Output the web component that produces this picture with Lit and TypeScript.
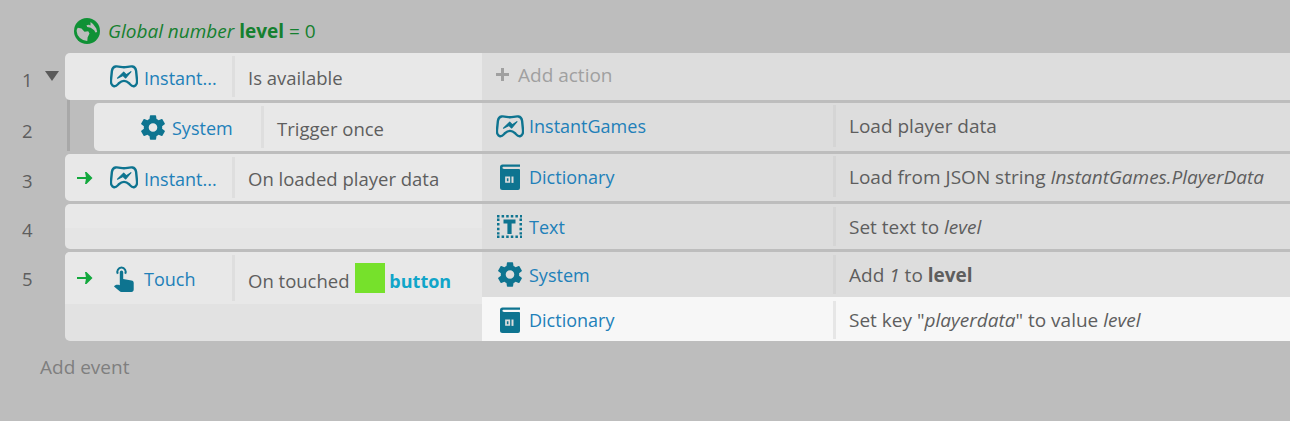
import { LitElement, html, css, svg } from "lit";
import { customElement } from "lit/decorators.js";

const icons: Record<string, any> = {
  game: svg`<svg class="ic" viewBox="0 0 28 23" width="28" height="23"><path d="M5.500 1.500c3-.5 5.500.8 8.500.8s5.500-1.300 8.500-.8c2.200.4 3.200 1.800 3.600 4.400l.9 9c.3 3-.8 5.900-3 6.300-2.100.4-3.200-1.200-5-3-1.500-1.500-3-2.300-5-2.300s-3.500.8-5 2.300c-1.800 1.800-2.900 3.400-5 3-2.200-.4-3.300-3.300-3-6.300l.9-9c.4-2.600 1.400-4 3.600-4.400z" fill="none" stroke="#0e7490" stroke-width="2.400"/><path d="M7.500 13.200l6.200-6 2.700 2.600 4.600-3.100-5.300 6.300-2.800-2.600z" fill="#0e7490" stroke="#0e7490" stroke-width="1.100" stroke-linejoin="round"/></svg>`,
  gear: svg`<svg class="ic" viewBox="2.300 1.800 19.400 20.400" width="24" height="25"><path fill="#0e7490" d="M19.430 12.980c.04-.32.07-.64.07-.98s-.03-.66-.07-.98l2.110-1.650c.19-.15.24-.42.120-.64l-2-3.460c-.12-.22-.39-.3-.61-.22l-2.490 1c-.52-.4-1.080-.73-1.690-.98l-.38-2.650C14.460 2.180 14.250 2 14 2h-4c-.25 0-.46.18-.49.42l-.38 2.650c-.61.25-1.170.59-1.690.98l-2.490-1c-.23-.09-.49 0-.61.22l-2 3.460c-.13.22-.07.49.12.64l2.110 1.650c-.04.32-.07.65-.07.98s.03.66.07.98l-2.110 1.650c-.19.15-.24.42-.12.64l2 3.460c.12.22.39.3.61.22l2.490-1c.52.4 1.080.73 1.690.98l.38 2.650c.03.24.24.42.49.42h4c.25 0 .46-.18.49-.42l.38-2.650c.61-.25 1.170-.59 1.690-.98l2.490 1c.23.09.49 0 .61-.22l2-3.460c.12-.22.07-.49-.12-.64l-2.110-1.650zM12 15.500c-1.930 0-3.500-1.570-3.500-3.500s1.570-3.500 3.500-3.500 3.500 1.570 3.500 3.500-1.570 3.500-3.500 3.500z"/></svg>`,
  dict: svg`<svg class="ic" viewBox="0 0 20 26" width="20" height="26"><path fill="#0e7490" d="M2.500 .5H20v2.200H4c-1 0-1.600.4-1.600 1.100S3 4.900 4 4.900h14.800c.7 0 1.200.5 1.200 1.200V24a2 2 0 0 1-2 2H2.500A2.500 2.500 0 0 1 0 23.500V3A2.500 2.500 0 0 1 2.500 .5z"/><path fill="none" stroke="#ddd" stroke-width="1.700" d="M6 13.400h3.300v4.600H6z"/><path fill="#ddd" d="M11.500 12.500h2v6.400h-2z"/></svg>`,
  text: svg`<svg class="ic" viewBox="0 0 25 23" width="25" height="23"><g fill="none" stroke="#0e7490" stroke-width="2.500" stroke-dasharray="2.500 2.100"><path d="M0 1.250h25M0 21.750h25M1.250 3.500v16M23.750 3.500v16"/></g><path fill="#0e7490" d="M6.500 4.500h12v4h-3.900v10.500h-4.200V8.500H6.500z"/></svg>`,
  touch: svg`<svg class="ic" viewBox="0 0 20 27" width="20" height="27"><path fill="none" stroke="#0e7490" stroke-width="2" d="M3.800 8.800a4.200 4.200 0 1 1 7.400 0"/><path fill="#0e7490" d="M5.800 7.300a1.700 1.700 0 0 1 3.400 0v6.700l8.300 1.500c1.500.3 2.200 1.200 2.200 2.500V24.500c0 1.400-.9 2.500-2.300 2.500H7.500c-.9 0-1.500-.3-2.100-.9L0 21.500c.9-1.500 3.100-2.200 5.800-1.200z"/></svg>`,
  globe: svg`<svg viewBox="0 0 26 26" width="26" height="26"><circle cx="13" cy="13" r="13" fill="#0f9135"/><path fill="#bdbdbd" d="M3.800 9.800l3.700.7 3 3.300 3.700-.5 1.300 2.300-1.900 4-.3 3.300A10.500 10.500 0 0 1 2.600 13c0-1.100.4-2.200 1.200-3.200z"/><path fill="#bdbdbd" d="M16.500 4l2.500 1.900 3.300 4.600.9 3.500-1.800.5-1.200-2.300-3.500-2.500-3.500-.8-.7-1.600 2.300-.5 1.700.6z"/></svg>`,
};
const arrow = svg`<svg viewBox="0 0 16 12" width="16" height="12"><path d="M0 5h10.500v2H0z" fill="#12a83d"/><path d="M8 0l1.500 0L15.500 6l-6 6H8l.8-4.300V4.300z" fill="#12a83d"/></svg>`;
const plus = svg`<svg viewBox="0 0 13 13" width="13" height="13"><path d="M5 0h3v5h5v3H8v5H5V8H0V5h5z" fill="#a0a0a0"/></svg>`;

@customElement("app-root")
export class AppRoot extends LitElement {
  static styles = css`
    :host { display: block; width: 1290px; height: 421px; overflow: hidden; background: #bdbdbd; font-family: "Open Sans", "Noto Sans", sans-serif; font-size: 19px; color: #5e5e5e; }
    .global { height: 53px; box-sizing: border-box; padding: 18px 0 0 74px; display: flex; align-items: flex-start; gap: 8px; color: #15802f; }
    .global svg { flex: none; }
    .global .t { line-height: 26px; }
    .row { display: flex; margin-bottom: 3px; }
    .row.last { margin-bottom: 0; }
    .num { width: 65px; flex: none; position: relative; box-sizing: border-box; padding: 6px 0 0 22px; display: flex; align-items: center; font-size: 18.500px; }
    .num.top { align-items: flex-start; padding-top: 14px; }
    .tri { position: absolute; left: 45px; top: 18px; width: 0; height: 0; border-left: 7px solid transparent; border-right: 7px solid transparent; border-top: 10px solid #5a5a5a; }
    .bar { position: absolute; left: 67px; top: -3px; bottom: 0; width: 3px; background: #a8a8a8; }
    .cond { width: 417px; flex: none; background: #e8e8e8; border-radius: 5px 0 0 5px; display: flex; flex-direction: column; }
    .cond.indent { margin-left: 29px; width: 388px; }
    .cond.split { background: linear-gradient(#e8e8e8 24px, #e5e5e5 24px); }
    .cond.low { background: #e2e2e2; }
    .c { display: flex; height: 100%; box-sizing: border-box; padding: 3px 0; font-size: 18.500px; }
    .c.top { height: 52px; background: #e8e8e8; border-radius: 5px 0 0 0; }
    .obj { width: 170px; flex: none; box-sizing: border-box; display: flex; align-items: center; padding-left: 12px; border-right: 3px solid #dedede; color: #2180b9; font-size: 18px; }
    .name { padding-top: 2px; }
    .go { width: 33px; flex: none; display: flex; }
    .icw { width: 28px; flex: none; display: flex; justify-content: center; margin-right: 6px; }
    .indent .icw { margin-right: 5px; }
    .txt { padding: 2px 0 0 13px; display: flex; align-items: center; white-space: pre; }
    .txt.low { padding-top: 5px; }
    .swatch { display: inline-block; width: 30px; height: 30px; background: #76e12b; margin: 0 4px 6px 1px; }
    .tag { font-weight: 700; color: #11a5c9; font-size: 18px; }
    .actions { flex: 1; display: flex; flex-direction: column; background: #ddd; min-width: 0; }
    .a { display: flex; height: 100%; box-sizing: border-box; padding: 3px 0; }
    .a.up { padding: 2px 0 4px; }
    .a.dn { padding: 4px 0 2px; }
    .a.h45 { height: 45px; flex: none; }
    .a.h44 { height: 44px; flex: none; }
    .a.sel { background: #f7f7f7; }
    .an { width: 354px; flex: none; box-sizing: border-box; padding-left: 13px; display: flex; align-items: center; color: #2180b9; border-right: 3px solid #d5d5d5; font-size: 18px; }
    .a.sel .an { border-color: #e6e6e6; }
    .ic0 { width: 29px; flex: none; display: flex; justify-content: center; margin-right: 5px; }
    .at { padding-left: 13px; display: flex; align-items: center; white-space: pre; }
    .add { padding: 0 0 4px 14px; box-sizing: border-box; display: flex; align-items: center; color: #a0a0a0; gap: 9px; height: 100%; }
    .addev { padding: 13px 0 0 40px; color: #7f7f7f; }
    i { font-style: italic; }
    b { font-weight: 700; }
  `;

  private act(ic: string, n: string, t: unknown, cls = "") {
    return html`<div class="a ${cls}"><div class="an"><span class="ic0">${icons[ic]}</span><span>${n}</span></div><div class="at">${t}</div></div>`;
  }

  private obj(ic: string, n: string, go = false) {
    return html`<div class="obj"><span class="go">${go ? arrow : ""}</span><span class="icw">${icons[ic]}</span><span class="name">${n}</span></div>`;
  }

  render() {
    return html`
      <div class="global">${icons.globe}<span class="t"><i>Global number</i> <b>level</b> = 0</span></div>

      <div class="row" style="height:47px">
        <div class="num">1<span class="tri"></span></div>
        <div class="cond"><div class="c">${this.obj("game", "Instant...")}<div class="txt">Is available</div></div></div>
        <div class="actions"><div class="add">${plus}<span>Add action</span></div></div>
      </div>

      <div class="row" style="height:48px">
        <div class="num">2<span class="bar"></span></div>
        <div class="cond indent"><div class="c">${this.obj("gear", "System")}<div class="txt">Trigger once</div></div></div>
        <div class="actions">${this.act("game", "InstantGames", "Load player data", "up")}</div>
      </div>

      <div class="row" style="height:47px">
        <div class="num">3</div>
        <div class="cond"><div class="c">${this.obj("game", "Instant...", true)}<div class="txt">On loaded player data</div></div></div>
        <div class="actions">${this.act("dict", "Dictionary", html`Load from JSON string <i>InstantGames.PlayerData</i>`, "up")}</div>
      </div>

      <div class="row" style="height:45px">
        <div class="num">4</div>
        <div class="cond split"></div>
        <div class="actions">${this.act("text", "Text", html`Set text to <i>level</i>`)}</div>
      </div>

      <div class="row last" style="height:89px">
        <div class="num top">5</div>
        <div class="cond low"><div class="c top">${this.obj("touch", "Touch", true)}<div class="txt low">On touched <span class="swatch"></span><span class="tag">button</span></div></div></div>
        <div class="actions">${this.act("gear", "System", html`Add <i>1</i> to <b>level</b>`, "h45")}${this.act("dict", "Dictionary", html`Set key "<i>playerdata</i>" to value <i>level</i>`, "sel h44 dn")}</div>
      </div>

      <div class="addev">Add event</div>
    `;
  }
}
